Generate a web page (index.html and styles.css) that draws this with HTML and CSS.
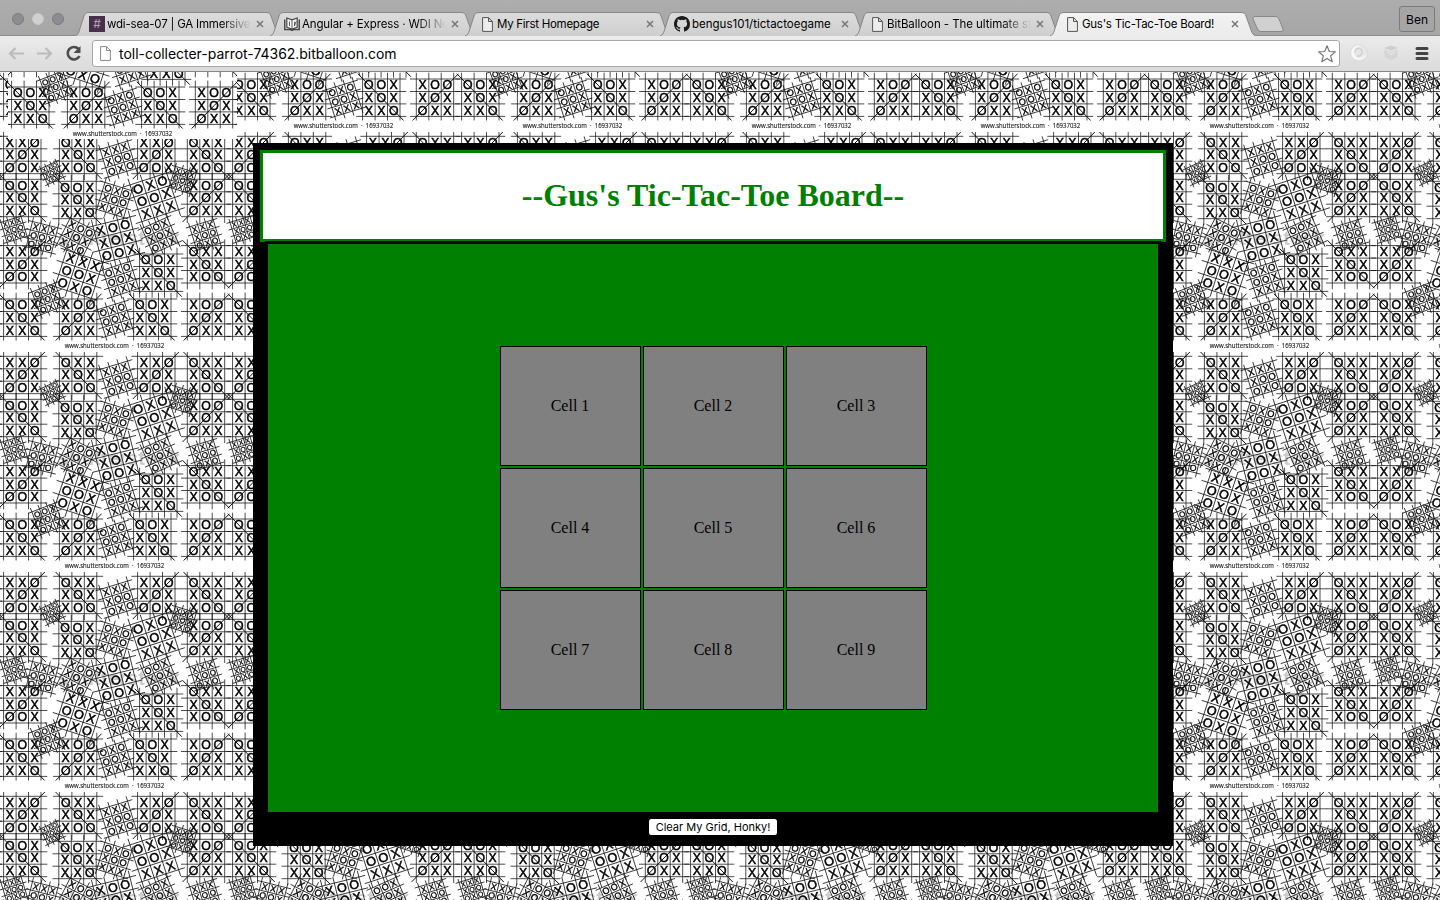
FILE: index.html
```html
<!DOCTYPE html>
<html lang="en">
<head>
<meta charset="utf-8">
<title>Gus's Tic-Tac-Toe Board!</title>
<link rel="stylesheet" href="styles.css">
</head>
<body>
<svg class="defs" width="0" height="0">
  <defs>
    <linearGradient id="tabFill" x1="0" y1="0" x2="0" y2="1"><stop offset="0" stop-color="#dcdcdc"/><stop offset="1" stop-color="#cecece"/></linearGradient>
    <linearGradient id="activeFill" x1="0" y1="0" x2="0" y2="1"><stop offset="0" stop-color="#f3f3f3"/><stop offset="1" stop-color="#ebebeb"/></linearGradient>
    <symbol id="tab" viewBox="0 0 206 24"><path d="M0 24C3 23 3.500 21 4.500 18L9 4C10 1.500 11 .5 14 .5H191C194 .5 195 1.500 196 4L201 18C202 21 203 23 206 24"/></symbol>
    <symbol id="page" viewBox="0 0 11 15"><path d="M.6 .6H6.500L10.400 4.500V14.400H.6ZM6.500 .6V4.500H10.400"/></symbol>
    <symbol id="close" viewBox="0 0 8 8"><path d="M1 1L7 7M7 1L1 7"/></symbol>
  </defs>
</svg>
<header class="browser">
  <div class="strip">
    <div class="lights"><i></i><i class="light"></i><i></i></div>
    <div class="tabs">
      <div class="tab"><svg class="shape"><use href="#tab"/></svg><span class="fav slack">#</span><span class="label fade t1">wdi-sea-07 | GA Immersive</span><svg class="close"><use href="#close"/></svg></div>
      <div class="tab"><svg class="shape"><use href="#tab"/></svg><svg class="fav book" viewBox="0 0 16 14"><path d="M.8 2.500V12.500H6.500L8 13.400L9.500 12.500H15.200V2.500" fill="#fff" stroke="#444" stroke-width="1.500"/><path d="M2.800 1L8 2.800L13.200 1V10.200L8 12L2.800 10.200Z" fill="#f4f4f4" stroke="#444" stroke-width="1.200"/><path d="M8 2.800V12M5.500 4.500V9M10.500 5V9L12 4.500" fill="none" stroke="#555" stroke-width=".9"/></svg><span class="label fade t2">Angular + Express · WDI No</span><svg class="close"><use href="#close"/></svg></div>
      <div class="tab"><svg class="shape"><use href="#tab"/></svg><svg class="fav page"><use href="#page"/></svg><span class="label t3">My First Homepage</span><svg class="close"><use href="#close"/></svg></div>
      <div class="tab"><svg class="shape"><use href="#tab"/></svg><svg class="fav" viewBox="0 0 16 16"><path fill="#1b1b1b" d="M8 0C3.580 0 0 3.580 0 8c0 3.540 2.290 6.530 5.470 7.590.4.070.550-.170.550-.380 0-.190-.010-.820-.010-1.490-2.010.370-2.530-.490-2.690-.940-.090-.230-.480-.940-.820-1.130-.280-.150-.680-.520-.010-.530.630-.010 1.080.580 1.230.820.720 1.210 1.870.870 2.330.660.070-.520.280-.870.510-1.070-1.780-.200-3.640-.890-3.640-3.950 0-.870.310-1.590.820-2.150-.080-.200-.360-1.020.080-2.120 0 0 .670-.210 2.200.820a7.600 7.600 0 0 1 4 0c1.530-1.040 2.200-.820 2.200-.820.440 1.100.160 1.920.080 2.120.510.560.820 1.270.820 2.150 0 3.070-1.870 3.750-3.650 3.950.290.250.540.730.540 1.480 0 1.070-.010 1.930-.010 2.200 0 .210.150.460.550.380A8 8 0 0 0 16 8c0-4.420-3.580-8-8-8z"/></svg><span class="label t4">bengus101/tictactoegame</span><svg class="close"><use href="#close"/></svg></div>
      <div class="tab"><svg class="shape"><use href="#tab"/></svg><svg class="fav page"><use href="#page"/></svg><span class="label fade t5">BitBalloon - The ultimate st</span><svg class="close"><use href="#close"/></svg></div>
      <div class="tab active"><svg class="shape"><use href="#tab"/></svg><svg class="fav page"><use href="#page"/></svg><span class="label t6">Gus's Tic-Tac-Toe Board!</span><svg class="close"><use href="#close"/></svg></div>
    </div>
    <svg class="newtab" viewBox="0 0 32 17"><path d="M3 .5H24Q26 .5 27 3L31 13Q32 15.500 29 15.500H9Q6.500 15.500 5.500 13L1 3Q.5 .5 3 .5Z" fill="#d0d0d0" stroke="#888"/></svg>
    <div class="user">Ben</div>
  </div>
  <div class="toolbar">
    <svg class="nav" viewBox="0 0 84 20" fill="none">
      <path d="M17 9.500H3M8.500 4L3 9.500L8.500 15M30 9.500H44M38.500 4L44 9.500L38.500 15" stroke="#bcbcbc" stroke-width="2.200"/>
      <path d="M71.500 5A6.200 6.200 0 1 0 72.500 12" stroke="#4c4c4c" stroke-width="2.600"/><path d="M73.500 2V9H66.500Z" fill="#4c4c4c"/>
    </svg>
    <div class="address">
      <svg class="addr-page"><use href="#page"/></svg><span class="url">toll-collecter-parrot-74362.bitballoon.com</span>
      <svg class="star" viewBox="0 0 20 20"><path d="M10 1.800L12.300 7.500L18.400 7.900L13.700 11.800L15.200 17.800L10 14.500L4.800 17.800L6.300 11.800L1.600 7.900L7.700 7.500Z" fill="#fff" stroke="#777" stroke-width="1.200" stroke-linejoin="round"/></svg>
    </div>
    <svg class="ext" viewBox="0 0 90 22" fill="none">
      <circle cx="17" cy="11" r="8.500" fill="#e6e6e6" stroke="#dcdcdc"/><path d="M9.500 13C8 7 13 2 19 3.500C13 5 11 9 13 13S21 17 25 11C24 18 13 21 9.500 13Z" fill="#f8f8f8"/><path d="M13 11C12 7 17 5 19.500 8S18 15 14.500 14" stroke="#cfcfcf" stroke-width="1.200"/>
      <path d="M42 6L49 3.500L56 6L49 8.500Z" fill="#cecece"/><path d="M42.500 7.500L49 10L55.500 7.500V15L49 18L42.500 15Z" fill="#d5d5d5"/><path d="M45 9.500L49 12.500L53 9.500" stroke="#e4e4e4" stroke-width="1.500"/>
      <path d="M75 6.500H85M75 11.500H85M75 16.500H85" stroke="#444" stroke-width="3" stroke-linecap="round"/>
    </svg>
  </div>
</header>
<main class="site">
  <svg class="wallpaper" width="1440" height="828" viewBox="0 72 1440 828">
    <defs>
      <pattern id="boards" x="0" y="132" width="229" height="220" patternUnits="userSpaceOnUse"><g id="tile"></g></pattern>
      <pattern id="boardsShifted" x="8" y="140" width="229" height="220" patternUnits="userSpaceOnUse"><use href="#tile"/></pattern>
    </defs>
    <rect y="72" width="1440" height="828" fill="url(#boards)"/>
    <rect x="8" y="72" width="229" height="67" fill="#fff"/>
    <rect x="8" y="72" width="229" height="67" fill="url(#boardsShifted)"/>
  </svg>
  <section class="game">
    <div class="banner"><h1>--Gus's Tic-Tac-Toe Board--</h1></div>
    <div class="field">
      <div class="grid">
        <div class="cell">Cell 1</div><div class="cell">Cell 2</div><div class="cell">Cell 3</div>
        <div class="cell">Cell 4</div><div class="cell">Cell 5</div><div class="cell">Cell 6</div>
        <div class="cell">Cell 7</div><div class="cell">Cell 8</div><div class="cell">Cell 9</div>
      </div>
    </div>
    <button class="clear">Clear My Grid, Honky!</button>
  </section>
</main>
<script src="script.js"></script>
</body>
</html>
```
FILE: styles.css
```css
body { margin: 0; width: 1440px; height: 900px; overflow: hidden; font-family: Inter, "Liberation Sans", sans-serif; }
.defs { position: absolute; }
.browser { height: 72px; display: flex; flex-direction: column; }
.strip { height: 36px; box-sizing: border-box; display: flex; background: linear-gradient(#adadad, #a6a6a6); border-bottom: 1px solid #8b8b8b; }
.lights { width: 75px; box-sizing: border-box; padding: 13px 0 0 12px; display: flex; gap: 8px; }
.lights i { width: 12px; height: 12px; box-sizing: border-box; border-radius: 50%; background: #8d8c91; border: 1px solid #7c7b80; }
.lights .light { background: #d0d0d0; border-color: #c6c6c6; }
.tabs { display: flex; padding-top: 12px; height: 24px; }
.tab { position: relative; width: 206px; height: 24px; margin-right: -11px; display: flex; align-items: center; box-sizing: border-box; padding-left: 14px; }
.shape { position: absolute; left: 0; top: 0; width: 206px; height: 24px; fill: url(#tabFill); stroke: #868686; overflow: visible; }
.active { z-index: 2; }
.active .shape { fill: url(#activeFill); }
.active::after { content: ""; position: absolute; left: 2px; right: 2px; bottom: 0; height: 1px; background: #ececec; }
.fav { position: relative; width: 16px; height: 16px; flex: none; margin-right: 2px; }
.book { height: 14px; }
.slack { background: #47304a; color: #b9a0b8; font-size: 12px; line-height: 16px; text-align: center; }
.page { width: 11px; height: 15px; margin: 0 4px 0 3px; fill: #ededed; stroke: #555; }
.label { position: relative; width: 144px; flex: none; overflow: hidden; white-space: nowrap; font-size: 11.5px; line-height: 16px; color: #000; }
.t1 { letter-spacing: -0.2px; }
.t2 { letter-spacing: -0.14px; }
.t3 { letter-spacing: -0.27px; }
.t5 { letter-spacing: -0.06px; }
.t6 { letter-spacing: -0.26px; }
.fade { -webkit-mask-image: linear-gradient(to right, #000 80%, transparent 100%); mask-image: linear-gradient(to right, #000 80%, transparent 100%); }
.close { position: relative; width: 8px; height: 8px; margin-left: 5px; fill: none; stroke: #777; stroke-width: 1.5; }
.newtab { width: 32px; height: 17px; margin: 16px 0 0 7px; }
.user { margin: 6px 5px 0 auto; width: 36px; height: 26px; box-sizing: border-box; border: 1px solid #7b7b7b; border-radius: 3px; background: #a5a5a5; text-align: center; font-size: 12px; line-height: 26px; }
.toolbar { height: 36px; box-sizing: border-box; display: flex; align-items: flex-start; background: linear-gradient(#ececec, #dadada); border-bottom: 1px solid #858585; }
.nav { width: 84px; height: 20px; margin: 8px 1px 0 7px; }
.address { display: flex; align-items: center; width: 1248px; height: 27px; box-sizing: border-box; margin-top: 4px; padding: 0 2px 0 7px; background: #fff; border: 1px solid #a8a8a8; border-radius: 3px; }
.addr-page { width: 11px; height: 15px; fill: #fff; stroke: #888; }
.url { margin-left: 8px; font-size: 14px; line-height: 20px; letter-spacing: -0.03px; color: #000; }
.star { width: 20px; height: 20px; margin-left: auto; }
.ext { width: 90px; height: 22px; margin: 6px 0 0 2px; }
.site { position: relative; height: 828px; box-sizing: border-box; padding: 71px 0 0 253px; background: #fff; font-family: "Liberation Serif", serif; }
.wallpaper { position: absolute; left: 0; top: 0; }
.line { fill: none; stroke: #111; }
.mark { font-family: "Liberation Sans", sans-serif; fill: #000; stroke: #000; stroke-width: .5px; text-anchor: middle; font-size: 12.3px; }
.credit { font: 7px "Open Sans", sans-serif; fill: #222; stroke: #222; stroke-width: .15px; }
.ghost { font: bold 20px "Liberation Sans", sans-serif; fill: #ccc; }
.game { position: relative; width: 920px; height: 703px; box-sizing: border-box; padding: 7px; background: #000; display: flex; flex-direction: column; align-items: center; }
.banner { width: 906px; height: 92px; box-sizing: border-box; border: 3px solid green; background: #fff; flex: none; }
.banner h1 { margin: 24px 0 0; font-size: 32px; line-height: 37px; color: green; text-align: center; }
.field { position: relative; width: 896px; height: 574px; box-sizing: border-box; margin-top: -1px; border: 3px solid #000; background: green; flex: none; display: flex; justify-content: center; align-items: flex-start; }
.grid { display: grid; grid-template-columns: repeat(3, 141px); grid-auto-rows: 120px; gap: 2px; margin-top: 102px; }
.cell { box-sizing: border-box; border: 1px solid #000; background: gray; font-size: 16px; line-height: 118px; text-align: center; }
.clear { width: 128px; height: 16px; margin-top: 4px; padding: 0; border: 0; border-radius: 2.5px; background: #fff; color: #000; font: 11px/16px Inter, sans-serif; white-space: nowrap; }
```
FILE: script.js
```js
// Boards of one wallpaper tile: centre x, centre y, cell size, rotation, rows, winning diagonal.
const boards = [
  [22.3, 23, 12.5, 0, "XXO/XOX/OOX", "/"], [22.3, 66, 12.5, 0, "OOX/XOX/XXO", "\\"],
  [78.1, 23, 12.5, 0, "OXX/XOX/XOO", "\\"], [77.5, 68, 12.5, 0, "OOX/XOX/XXO", "\\"],
  [156.3, 23, 12.5, 0, "XXO/XOX/OOX", "/"], [206, 23, 12.5, 0, "OXX/XOX/XOO", "\\"],
  [206, 66, 12.5, 0, "XOO/XOX/OXX", "/"], [22.3, 132.3, 12.5, 0, "XXO/XOX/OOX", "/"],
  [206, 132.3, 12.5, 0, "OXX/XOX/XOO", "\\"], [158.3, 140.7, 12.5, 0, "OOX/XOX/XXO", "\\"],
  [22.3, 185.7, 12.5, 0, "OOX/XOX/XXO", "\\"], [78.1, 185.7, 12.5, 0, "XOO/XOX/OXX", "/"],
  [152.3, 185.7, 12.5, 0, "OOX/XOX/XXO", "\\"], [206, 185.7, 12.5, 0, "XOO/XOX/OXX", "/"],
  [118, 27, 9.6, -17, "XXX/XOO/OXO"], [114.3, 68, 9.4, 17, "OXO/XOO/XXX"],
  [154.3, 65.3, 12.9, -18, "OXO/OOX/XXX"], [182.7, 48, 7.3, 17, "XXX/OOX/OXO"],
  [52, 41, 5.8, -25, "XXO/XOX/XOX"], [14, 97.3, 7, -17, "XXX/XOO/OXO"],
  [42, 105.3, 8.7, 14, "XXX/OOX/OXO"], [76.5, 105.3, 9.6, 27, "XOO/XOX/XXO"],
  [116, 108, 12.7, -14, "XOO/XOX/OOX"], [160, 103.5, 9.2, -24, "OOX/XOX/OXX"],
  [205, 103, 8.2, -17, "XXX/XOO/OXO"], [79, 142.3, 12.8, 18, "XXX/OOX/OXO"],
  [120.7, 147.3, 9.5, -18, "OXO/OOX/XXX"], [47.7, 167, 8.2, -21, "OOX/XOX/OXX"],
  [115, 187, 9.4, -17, "OXO/OOX/XXX"]
];

function board([x, y, size, angle, rows, diagonal]) {
  const k = size / 12.5;
  const grid = [-18.7, -6.2, 6.2, 18.7]
    .map(p => `M${p} -25V25M-25 ${p}H25`).join("");
  const slash = diagonal === "/" ? "M-23.500 24L23.500 -24" : diagonal ? "M-23.500 -24L23.500 24" : "";
  const marks = rows.split("/")
    .map((row, i) => `<text class="mark" x="-12.4 0 12.4" y="${(i - 1) * 12.7 + 4.4}">${row}</text>`).join("");
  return `<g transform="translate(${x} ${y}) rotate(${angle}) scale(${k})">` +
    `<path class="line" stroke-width="${0.75 / k}" d="${grid}"/>` +
    `<path class="line" stroke-width="1" d="${slash}"/>${marks}</g>`;
}

const content = boards.map(board).join("");
// Neighbouring copies carry boards across the left and right seams.
const wrapped = boards.filter(b => b[0] < 30).map(b => board([b[0] + 229, ...b.slice(1)])).join("") +
  boards.filter(b => b[0] > 199).map(b => board([b[0] - 229, ...b.slice(1)])).join("");
document.getElementById("tile").innerHTML =
  `<text class="ghost" x="58" y="113" textLength="122">shutterstock</text>${content}${wrapped}` +
  `<rect y="208.500" width="229" height="11.500" fill="#fff"/>` +
  `<text class="credit" x="64.700" y="216.300" textLength="99.500" lengthAdjust="spacingAndGlyphs">www.shutterstock.com\u00a0 ·\u00a0 16937032</text>`;
```
